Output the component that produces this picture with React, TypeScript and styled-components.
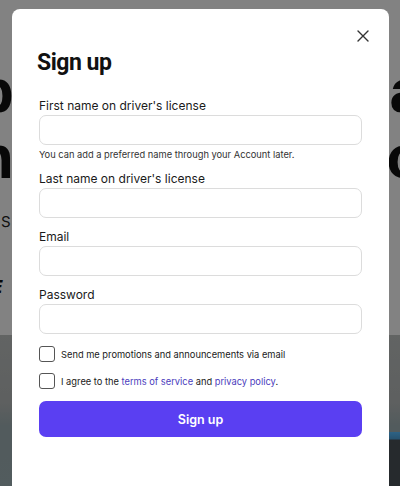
import styled, { createGlobalStyle } from 'styled-components'

const GlobalStyle = createGlobalStyle`
  html, body {
    margin: 0;
    padding: 0;
    background: #fff;
  }
  body {
    font-family: Inter, "Open Sans", "Liberation Sans", sans-serif;
    color: #111;
  }
`

const Page = styled.div`
  position: relative;
  width: 400px;
  height: 486px;
  overflow: hidden;
  background: #fff;
`

const Backdrop = styled.div`
  display: flex;
  flex-direction: column;
  height: 100%;
`

const Hero = styled.div`
  height: 335px;
  padding-top: 58px;
  box-sizing: border-box;
  background: #fafafa;
  display: flex;
  flex-direction: column;
`

const HeroLine = styled.div`
  display: flex;
  justify-content: space-between;
  font-family: "Liberation Sans", sans-serif;
  font-weight: 700;
  font-size: 62px;
  line-height: 66px;
  color: #111;
  margin: 0 -24px;
`

const HeroSub = styled.div`
  margin-top: 22px;
  margin-left: -12px;
  font-size: 15px;
  color: #222;
`

const HeroCta = styled.div`
  margin-top: 46px;
  margin-left: -8px;
  font-size: 17px;
  font-weight: 800;
  font-style: italic;
  color: #111;
`

const Photo = styled.div`
  flex: 1;
  background: linear-gradient(180deg, #bcc0bf 0%, #b4b8b8 45%, #9eaeb2 60%, #9db0b4 100%);
  display: flex;
  flex-direction: column;
  justify-content: flex-end;
`

const PhotoFloor = styled.div`
  height: 54px;
  margin-left: 60%;
  background: linear-gradient(180deg, #58bdff 0px, #4d9fd6 7px, #4a5157 8px, #4a5157 100%);
`

const Dim = styled.div`
  position: absolute;
  inset: 0;
  background: rgba(0, 0, 0, 0.48);
`

const Modal = styled.div`
  position: absolute;
  top: 9px;
  left: 12px;
  width: 377px;
  bottom: -20px;
  background: #fff;
  border-radius: 8px;
  padding: 39px 27px 0;
  box-sizing: border-box;
  display: flex;
  flex-direction: column;
`

const CloseButton = styled.button`
  position: absolute;
  top: 17px;
  right: 16px;
  width: 20px;
  height: 20px;
  padding: 0;
  border: none;
  background: transparent;
  display: flex;
  align-items: center;
  justify-content: center;
  cursor: pointer;
`

const Title = styled.h2`
  margin: 0 0 20px -2px;
  font-family: Roboto, "Liberation Sans", sans-serif;
  font-size: 23px;
  line-height: 30px;
  font-weight: 700;
  letter-spacing: -0.5px;
  color: #111;
`

const Field = styled.div`
  display: flex;
  flex-direction: column;
  & + & {
    margin-top: 11px;
  }
`

const Label = styled.label`
  font-size: 12px;
  line-height: 16px;
  color: #1a1a1a;
  margin-bottom: 1px;
`

const Input = styled.input`
  height: 30px;
  box-sizing: border-box;
  border: 1px solid #dcdcdc;
  border-radius: 7px;
  padding: 0 10px;
  font-family: inherit;
  font-size: 13px;
  outline: none;
`

const Hint = styled.div`
  margin-top: 3px;
  margin-bottom: -2px;
  font-size: 9.3px;
  line-height: 14px;
  color: #333;
`

const Checks = styled.div`
  margin-top: 12px;
  display: flex;
  flex-direction: column;
  gap: 11px;
`

const CheckRow = styled.label`
  display: flex;
  align-items: center;
  gap: 6px;
  font-size: 9.3px;
  color: #1a1a1a;
`

const Box = styled.span`
  width: 16px;
  height: 16px;
  box-sizing: border-box;
  border: 1px solid #555;
  border-radius: 3px;
  flex-shrink: 0;
`

const Link = styled.a`
  color: #4b3dbd;
  text-decoration: none;
`

const Submit = styled.button`
  margin-top: 12px;
  height: 36px;
  border: none;
  border-radius: 7px;
  background: #5a3ff2;
  color: #fff;
  font-family: inherit;
  font-size: 12.5px;
  font-weight: 600;
  cursor: pointer;
`

const fields = [
  { label: "First name on driver's license", type: 'text', hint: 'You can add a preferred name through your Account later.' },
  { label: "Last name on driver's license", type: 'text' },
  { label: 'Email', type: 'email' },
  { label: 'Password', type: 'password' },
]

const App = () => {
  return (
    <Page>
      <GlobalStyle />
      <Backdrop>
        <Hero>
          <HeroLine>
            <span>p</span>
            <span>a</span>
          </HeroLine>
          <HeroLine>
            <span>n</span>
            <span>o</span>
          </HeroLine>
          <HeroSub>n S</HeroSub>
          <HeroCta>E</HeroCta>
        </Hero>
        <Photo>
          <PhotoFloor />
        </Photo>
      </Backdrop>
      <Dim />
      <Modal>
        <CloseButton aria-label="Close">
          <svg width="12" height="12" viewBox="0 0 12 12">
            <path d="M1 1 L11 11 M11 1 L1 11" stroke="#333" strokeWidth="1.4" strokeLinecap="round" />
          </svg>
        </CloseButton>
        <Title>Sign up</Title>
        {fields.map(f => (
          <Field key={f.label}>
            <Label>{f.label}</Label>
            <Input type={f.type} />
            {f.hint && <Hint>{f.hint}</Hint>}
          </Field>
        ))}
        <Checks>
          <CheckRow>
            <Box />
            Send me promotions and announcements via email
          </CheckRow>
          <CheckRow>
            <Box />
            <span>
              I agree to the <Link href="#">terms of service</Link> and <Link href="#">privacy policy</Link>.
            </span>
          </CheckRow>
        </Checks>
        <Submit>Sign up</Submit>
      </Modal>
    </Page>
  )
}

export default App
